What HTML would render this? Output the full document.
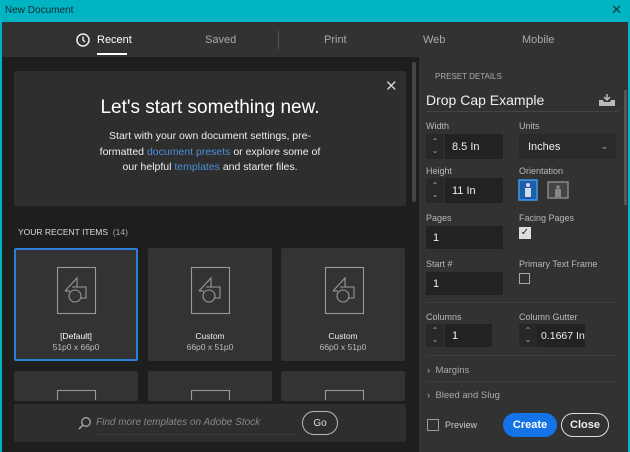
<!DOCTYPE html>
<html><head><style>
*{box-sizing:border-box;margin:0;padding:0}
body{width:630px;height:452px;background:#00b4c4;font-family:"Liberation Sans",sans-serif;position:relative;overflow:hidden;color:#ddd}
.a{position:absolute}
.lbl{font-size:9px;color:#b8b8b8}
.in{background:#222;color:#eee;font-size:11px;padding-left:7px;display:flex;align-items:center;white-space:nowrap}
.step{background:#282828;color:#aaa;font-size:8px;line-height:9px;text-align:center}
.card{background:#333;border-radius:2px}
</style></head><body>
<div class="a" style="left:5px;top:5px;font-size:10px;color:#102a2e">New Document</div>
<div class="a" style="right:8px;top:2px;font-size:13px;color:#173538">✕</div>
<div class="a" style="left:2px;top:22px;width:626px;height:430px;background:#1e1e1e"></div>
<div class="a" style="left:2px;top:22px;width:626px;height:35px;background:#323232"></div>
<svg class="a" style="left:76px;top:33px" width="14" height="14"><circle cx="7" cy="7" r="6" fill="none" stroke="#eee" stroke-width="1.5"/><path d="M7 3.5V7l2 2" stroke="#eee" stroke-width="1.4" fill="none"/></svg>
<div class="a" style="left:97px;top:34px;font-size:11px;color:#fff">Recent</div>
<div class="a" style="left:97px;top:53px;width:30px;height:2px;background:#fff"></div>
<div class="a" style="left:205px;top:34px;font-size:11px;color:#aaa">Saved</div>
<div class="a" style="left:278px;top:31px;width:1px;height:18px;background:#555"></div>
<div class="a" style="left:324px;top:34px;font-size:11px;color:#aaa">Print</div>
<div class="a" style="left:423px;top:34px;font-size:11px;color:#aaa">Web</div>
<div class="a" style="left:522px;top:34px;font-size:11px;color:#aaa">Mobile</div>
<div class="a" style="left:14px;top:71px;width:392px;height:135px;background:#2e2e2e;border-radius:2px"></div>
<div class="a" style="left:385px;top:77px;font-size:15px;color:#ccc">✕</div>
<div class="a" style="left:14px;top:97px;width:392px;text-align:center;font-size:19px;color:#fff">Let's start something new.</div>
<div class="a" style="left:60px;top:129px;width:300px;text-align:center;font-size:10.5px;line-height:15.5px;color:#eee;white-space:nowrap">Start with your own document settings, pre-<br>formatted <span style="color:#4a90d9">document presets</span> or explore some of<br>our helpful <span style="color:#4a90d9">templates</span> and starter files.</div>
<div class="a" style="left:412px;top:62px;width:4px;height:140px;background:#444;border-radius:2px"></div>
<div class="a" style="left:18px;top:227px;font-size:8.5px;color:#ddd">YOUR RECENT ITEMS <span style="color:#aaa">&nbsp;(14)</span></div>
<div class="a card" style="left:14px;top:248px;width:124px;height:113px;border:2px solid #2d7fd9"></div>
<div class="a card" style="left:148px;top:248px;width:124px;height:113px"></div>
<div class="a card" style="left:281px;top:248px;width:124px;height:113px"></div>
<div class="a card" style="left:14px;top:371px;width:124px;height:30px"></div>
<div class="a card" style="left:148px;top:371px;width:124px;height:30px"></div>
<div class="a card" style="left:281px;top:371px;width:124px;height:30px"></div>
<svg class="a" style="left:0;top:260px" width="420" height="140">
<g fill="none" stroke="#999" stroke-width="1.1">
<g id="ic"><rect x="57.5" y="7.5" width="38" height="46"/><path d="M65 31L77 18V27M72 27H86V38H81"/><circle cx="75" cy="36" r="6"/><path d="M65 31H70"/></g>
<use href="#ic" x="134"/><use href="#ic" x="268"/>
<rect x="57.5" y="130.5" width="38" height="20"/><rect x="191.5" y="130.5" width="38" height="20"/><rect x="325.5" y="130.5" width="38" height="20"/>
</g></svg>
<div class="a" style="left:14px;top:331px;width:124px;text-align:center;font-size:8.5px;color:#fff;line-height:11px">[Default]<br><span style="color:#bbb">51p0 x 66p0</span></div>
<div class="a" style="left:148px;top:331px;width:124px;text-align:center;font-size:8.5px;color:#eee;line-height:11px">Custom<br><span style="color:#bbb">66p0 x 51p0</span></div>
<div class="a" style="left:281px;top:331px;width:124px;text-align:center;font-size:8.5px;color:#eee;line-height:11px">Custom<br><span style="color:#bbb">66p0 x 51p0</span></div>
<div class="a" style="left:14px;top:404px;width:392px;height:38px;background:#2e2e2e;border-radius:2px"></div>
<svg class="a" style="left:78px;top:416px" width="14" height="14"><circle cx="8" cy="6" r="4.3" fill="none" stroke="#aaa" stroke-width="1.3"/><path d="M5 9l-4 4" stroke="#aaa" stroke-width="1.5"/></svg>
<div class="a" style="left:96px;top:417px;font-size:10px;font-style:italic;color:#888">Find more templates on Adobe Stock</div>
<div class="a" style="left:96px;top:434px;width:200px;height:1px;background:#3c3c3c"></div>
<div class="a" style="left:302px;top:411px;width:36px;height:24px;border:1.5px solid #bbb;border-radius:12px;font-size:10px;color:#ddd;display:flex;align-items:center;justify-content:center">Go</div>
<div class="a" style="left:419px;top:57px;width:209px;height:395px;background:#323232"></div>
<div class="a" style="left:624px;top:90px;width:3px;height:115px;background:#555"></div>
<div class="a" style="left:435px;top:72px;font-size:8px;color:#aaa">PRESET DETAILS</div>
<div class="a" style="left:426px;top:92px;font-size:14px;color:#eee">Drop Cap Example</div>
<div class="a" style="left:426px;top:111px;width:192px;height:1px;background:#444"></div>
<svg class="a" style="left:598px;top:93px" width="18" height="14"><path d="M9 1v6M6 4l3 3 3-3" stroke="#bbb" stroke-width="1.5" fill="none"/><path d="M1 7h4l1 2h6l1-2h4v6H1z" fill="#bbb"/></svg>
<div class="a lbl" style="left:426px;top:121px">Width</div>
<div class="a step" style="left:426px;top:134px;width:18px;height:25px;padding-top:3px">⌃<br>⌄</div>
<div class="a in" style="left:445px;top:134px;width:58px;height:25px">8.5 In</div>
<div class="a lbl" style="left:519px;top:121px">Units</div>
<div class="a in" style="left:519px;top:134px;width:97px;height:25px;background:#2a2a2a;padding-left:9px">Inches<span style="position:absolute;right:8px;color:#aaa;font-size:9px">⌄</span></div>
<div class="a lbl" style="left:426px;top:166px">Height</div>
<div class="a step" style="left:426px;top:178px;width:18px;height:25px;padding-top:3px">⌃<br>⌄</div>
<div class="a in" style="left:445px;top:178px;width:58px;height:25px">11 In</div>
<div class="a lbl" style="left:519px;top:166px">Orientation</div>
<svg class="a" style="left:518px;top:179px" width="60" height="22"><rect x="1" y="1" width="18" height="20" fill="#1f5fa8" stroke="#3c9bf0" stroke-width="1.5"/><circle cx="10" cy="6" r="2" fill="#cde"/><rect x="7" y="9" width="6" height="9" fill="#cde"/><rect x="30" y="3" width="20" height="16" fill="#444" stroke="#888" stroke-width="1.5"/><circle cx="40" cy="8" r="1.8" fill="#888"/><rect x="37" y="10" width="6" height="8" fill="#888"/></svg>
<div class="a lbl" style="left:426px;top:213px">Pages</div>
<div class="a in" style="left:426px;top:226px;width:77px;height:23px">1</div>
<div class="a lbl" style="left:519px;top:213px">Facing Pages</div>
<div class="a" style="left:519px;top:227px;width:12px;height:12px;background:#ddd;color:#222;font-size:10px;line-height:12px;text-align:center">✓</div>
<div class="a lbl" style="left:426px;top:259px">Start #</div>
<div class="a in" style="left:426px;top:272px;width:77px;height:23px">1</div>
<div class="a lbl" style="left:519px;top:259px">Primary Text Frame</div>
<div class="a" style="left:519px;top:273px;width:11px;height:11px;border:1px solid #aaa"></div>
<div class="a" style="left:426px;top:302px;width:190px;height:1px;background:#3e3e3e"></div>
<div class="a lbl" style="left:426px;top:312px">Columns</div>
<div class="a step" style="left:426px;top:324px;width:18px;height:23px;padding-top:2px">⌃<br>⌄</div>
<div class="a in" style="left:445px;top:324px;width:47px;height:23px">1</div>
<div class="a lbl" style="left:519px;top:312px">Column Gutter</div>
<div class="a step" style="left:519px;top:324px;width:18px;height:23px;padding-top:2px">⌃<br>⌄</div>
<div class="a in" style="left:537px;top:324px;width:48px;height:23px;padding-left:4px;font-size:10.5px">0.1667 In</div>
<div class="a" style="left:426px;top:355px;width:190px;height:1px;background:#3e3e3e"></div>
<div class="a" style="left:427px;top:365px;font-size:9.5px;color:#aaa">›&nbsp; Margins</div>
<div class="a" style="left:426px;top:381px;width:190px;height:1px;background:#3e3e3e"></div>
<div class="a" style="left:427px;top:390px;font-size:9.5px;color:#aaa">›&nbsp; Bleed and Slug</div>
<div class="a" style="left:427px;top:419px;width:12px;height:12px;border:1px solid #999"></div>
<div class="a" style="left:445px;top:420px;font-size:9px;color:#ccc">Preview</div>
<div class="a" style="left:503px;top:413px;width:54px;height:24px;background:#1473e6;border-radius:12px;color:#fff;font-size:11px;font-weight:bold;display:flex;align-items:center;justify-content:center">Create</div>
<div class="a" style="left:561px;top:413px;width:48px;height:24px;border:1.5px solid #ddd;border-radius:12px;color:#eee;font-size:11px;font-weight:bold;display:flex;align-items:center;justify-content:center">Close</div>
</body></html>
